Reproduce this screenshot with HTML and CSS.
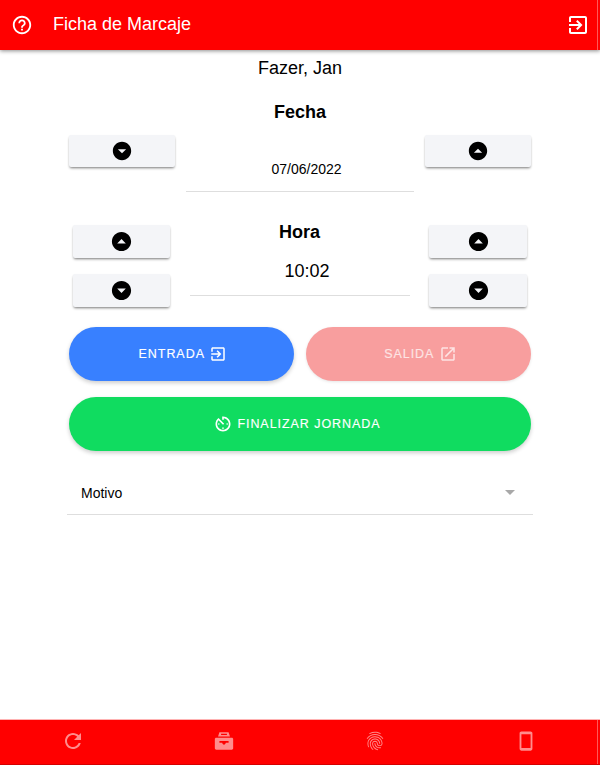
FILE: index.html
```html
<!DOCTYPE html>
<html lang="es">
<head>
<meta charset="utf-8">
<title>Ficha de Marcaje</title>
<link rel="stylesheet" href="styles.css">
</head>
<body>
<div class="page">
  <header class="topbar">
    <svg class="ico ico-22" viewBox="0 0 24 24"><path d="M11 18h2v-2h-2v2zm1-16C6.48 2 2 6.48 2 12s4.48 10 10 10 10-4.48 10-10S17.52 2 12 2zm0 18c-4.41 0-8-3.59-8-8s3.59-8 8-8 8 3.59 8 8-3.59 8-8 8zm0-14c-2.21 0-4 1.79-4 4h2c0-1.1.9-2 2-2s2 .9 2 2c0 2-3 1.75-3 5h2c0-2.25 3-2.5 3-5 0-2.21-1.79-4-4-4z"/></svg>
    <h1 class="title">Ficha de Marcaje</h1>
    <svg class="ico ico-24" viewBox="0 0 24 24"><path d="M10.09 15.59L11.5 17l5-5-5-5-1.41 1.41L12.67 11H3v2h9.67l-2.58 2.59zM19 3H5c-1.11 0-2 .9-2 2v4h2V5h14v14H5v-4H3v4c0 1.1.89 2 2 2h14c1.1 0 2-.9 2-2V5c0-1.1-.9-2-2-2z"/></svg>
  </header>

  <main class="content">
    <div class="user">Fazer, Jan</div>
    <h2 class="heading heading-date">Fecha</h2>
    <section class="date-row">
      <button class="step"><svg class="ico-step" viewBox="0 0 24 24"><path d="M12 2C6.48 2 2 6.48 2 12s4.48 10 10 10 10-4.48 10-10S17.52 2 12 2zm0 12.500l-4.500-4.500h9l-4.500 4.500z"/></svg></button>
      <div class="field field-date">07/06/2022</div>
      <button class="step"><svg class="ico-step" viewBox="0 0 24 24"><path d="M12 2C6.48 2 2 6.48 2 12s4.48 10 10 10 10-4.48 10-10S17.52 2 12 2zm0 7.500l4.500 4.500h-9l4.500-4.500z"/></svg></button>
    </section>

    <section class="time-row">
      <div class="step-col">
        <button class="step"><svg class="ico-step" viewBox="0 0 24 24"><path d="M12 2C6.48 2 2 6.48 2 12s4.48 10 10 10 10-4.48 10-10S17.52 2 12 2zm0 7.500l4.500 4.500h-9l4.500-4.500z"/></svg></button>
        <button class="step"><svg class="ico-step" viewBox="0 0 24 24"><path d="M12 2C6.48 2 2 6.48 2 12s4.48 10 10 10 10-4.48 10-10S17.52 2 12 2zm0 12.500l-4.500-4.500h9l-4.500 4.500z"/></svg></button>
      </div>
      <div class="time-mid">
        <h2 class="heading">Hora</h2>
        <div class="field field-time"><span class="time-val">10:02</span></div>
      </div>
      <div class="step-col">
        <button class="step"><svg class="ico-step" viewBox="0 0 24 24"><path d="M12 2C6.48 2 2 6.48 2 12s4.48 10 10 10 10-4.48 10-10S17.52 2 12 2zm0 7.500l4.500 4.500h-9l4.500-4.500z"/></svg></button>
        <button class="step"><svg class="ico-step" viewBox="0 0 24 24"><path d="M12 2C6.48 2 2 6.48 2 12s4.48 10 10 10 10-4.48 10-10S17.52 2 12 2zm0 12.500l-4.500-4.500h9l-4.500 4.500z"/></svg></button>
      </div>
    </section>

    <section class="actions">
      <button class="pill pill-in">ENTRADA <svg class="ico ico-btn" viewBox="0 0 24 24"><path d="M10.09 15.59L11.5 17l5-5-5-5-1.41 1.41L12.67 11H3v2h9.67l-2.58 2.59zM19 3H5c-1.11 0-2 .9-2 2v4h2V5h14v14H5v-4H3v4c0 1.1.89 2 2 2h14c1.1 0 2-.9 2-2V5c0-1.1-.9-2-2-2z"/></svg></button>
      <button class="pill pill-out">SALIDA <svg class="ico ico-btn" viewBox="0 0 24 24"><path d="M19 19H5V5h7V3H5c-1.11 0-2 .9-2 2v14c0 1.1.89 2 2 2h14c1.1 0 2-.9 2-2v-7h-2v7zM14 3v2h3.59l-9.83 9.83 1.41 1.41L19 6.41V10h2V3h-7z"/></svg></button>
      <button class="pill pill-end"><svg class="ico ico-timer" viewBox="0 0 24 24"><path d="M11 17c0 .55.45 1 1 1s1-.45 1-1-.45-1-1-1-1 .45-1 1zm0-14v4h2V5.08c3.39.49 6 3.39 6 6.92 0 3.87-3.13 7-7 7s-7-3.13-7-7c0-1.68.59-3.22 1.58-4.42L12 13l1.41-1.41-6.8-6.8v.02C4.42 6.45 3 9.05 3 12c0 4.97 4.02 9 9 9 4.97 0 9-4.03 9-9s-4.03-9-9-9h-1zm7 9c0-.55-.45-1-1-1s-1 .45-1 1 .45 1 1 1 1-.45 1-1zM6 12c0 .55.45 1 1 1s1-.45 1-1-.45-1-1-1-1 .45-1 1z"/></svg> FINALIZAR JORNADA</button>
    </section>

    <div class="select">
      <span>Motivo</span>
      <span class="caret"></span>
    </div>
  </main>

  <footer class="tabs">
    <svg class="tab-ico tab-ico-lg" viewBox="0 0 24 24"><path d="M17.65 6.35C16.2 4.9 14.21 4 12 4c-4.42 0-7.99 3.58-7.99 8s3.57 8 7.99 8c3.73 0 6.84-2.55 7.73-6h-2.08c-.82 2.33-3.04 4-5.65 4-3.31 0-6-2.69-6-6s2.69-6 6-6c1.66 0 3.14.69 4.22 1.78L13 11h7V4l-2.35 2.35z"/></svg>
    <svg class="tab-ico" viewBox="0 0 24 24"><path d="M7 2.500h10L18.500 7h-13zM8.800 4v1.500h6.400V4zM3.500 8.500h17c.8 0 1.500.7 1.500 1.500v10c0 .8-.7 1.500-1.500 1.500h-17c-.8 0-1.500-.7-1.500-1.500V10c0-.8.7-1.500 1.500-1.500zM7 12v2h3c.3 1.200 1 2 2 2s1.700-.8 2-2h3v-2z" fill-rule="evenodd"/></svg>
    <svg class="tab-ico" viewBox="0 0 24 24"><path d="M17.81 4.47c-.08 0-.16-.02-.23-.06C15.66 3.42 14 3 12.01 3c-1.98 0-3.86.47-5.58 1.41-.24.13-.54.04-.68-.2-.13-.24-.04-.55.2-.68C7.82 2.52 9.86 2 12.01 2c2.13 0 3.99.47 6.03 1.52.25.13.34.43.21.67-.09.18-.26.28-.44.28zM3.5 9.72c-.1 0-.2-.03-.29-.09-.23-.16-.28-.47-.12-.7.99-1.4 2.25-2.5 3.75-3.27C9.98 4.04 14 4.03 17.15 5.65c1.5.77 2.76 1.86 3.75 3.25.16.22.11.54-.12.7-.23.16-.54.11-.7-.12-.9-1.26-2.04-2.25-3.39-2.94-2.87-1.47-6.54-1.47-9.4.01-1.36.7-2.5 1.7-3.4 2.96-.08.14-.23.21-.39.21zm6.25 12.07c-.13 0-.26-.05-.35-.15-.87-.87-1.34-1.43-2.01-2.64-.69-1.23-1.05-2.73-1.05-4.34 0-2.97 2.54-5.39 5.66-5.39s5.66 2.42 5.66 5.39c0 .28-.22.5-.5.5s-.5-.22-.5-.5c0-2.42-2.09-4.39-4.66-4.39-2.57 0-4.66 1.97-4.66 4.39 0 1.44.32 2.77.93 3.85.64 1.15 1.08 1.64 1.85 2.42.19.2.19.51 0 .71-.11.1-.24.15-.37.15zm7.17-1.85c-1.19 0-2.24-.3-3.1-.89-1.49-1.01-2.38-2.65-2.38-4.39 0-.28.22-.5.5-.5s.5.22.5.5c0 1.41.72 2.74 1.94 3.56.71.48 1.54.71 2.54.71.24 0 .64-.03 1.04-.1.27-.05.53.13.58.41.05.27-.13.53-.41.58-.57.11-1.07.12-1.21.12zM14.91 22c-.04 0-.09-.01-.13-.02-1.59-.44-2.63-1.03-3.72-2.1-1.4-1.39-2.17-3.24-2.17-5.22 0-1.62 1.38-2.94 3.08-2.94 1.7 0 3.08 1.32 3.08 2.94 0 1.07.93 1.94 2.08 1.94s2.08-.87 2.08-1.94c0-3.77-3.25-6.83-7.25-6.83-2.84 0-5.44 1.58-6.61 4.03-.39.81-.59 1.76-.59 2.8 0 .78.07 2.01.67 3.61.1.26-.03.55-.29.64-.26.1-.55-.04-.64-.29-.49-1.31-.73-2.61-.73-3.96 0-1.2.23-2.29.68-3.24 1.33-2.79 4.28-4.6 7.51-4.6 4.55 0 8.25 3.51 8.25 7.83 0 1.62-1.38 2.94-3.08 2.94s-3.08-1.32-3.08-2.94c0-1.07-.93-1.94-2.08-1.94s-2.08.87-2.08 1.94c0 1.71.66 3.31 1.87 4.51.95.94 1.86 1.46 3.27 1.85.27.07.42.35.35.61-.05.23-.26.38-.47.38z"/></svg>
    <svg class="tab-ico" viewBox="0 0 24 24"><path d="M7 1.500h10c1.100 0 2 .9 2 2v17c0 1.100-.9 2-2 2H7c-1.100 0-2-.9-2-2v-17c0-1.100.9-2 2-2zM7 4.500v15h10v-15z" fill-rule="evenodd"/></svg>
  </footer>
</div>
</body>
</html>
```
FILE: styles.css
```css
* { box-sizing: border-box; }
html, body { margin: 0; padding: 0; height: 100%; background: #fff; }
body { font-family: "Liberation Sans", Arial, sans-serif; color: #000; }

.page { width: 600px; height: 765px; display: flex; flex-direction: column; overflow: hidden; }

.topbar {
  height: 50px; flex: none; background: #f00; color: #fff;
  display: flex; align-items: center; padding: 0 10px 1px;
  box-shadow: 0 1px 4px rgba(0, 0, 0, .45); position: relative; z-index: 1;
}
.topbar::after, .tabs::after {
  content: ""; position: absolute; top: 0; bottom: 0; right: 2px; width: 1px;
  background: rgba(255, 255, 255, .35);
}
.title { flex: 1; margin: -1px 0 0 20.500px; font-size: 18px; font-weight: 400; }
.ico { fill: currentColor; display: block; flex: none; }
.ico-24 { width: 24px; height: 24px; }
.ico-22 { width: 22px; height: 22px; margin-left: .500px; }
.ico-btn { width: 18px; height: 18px; }
.ico-timer { width: 20px; height: 20px; }

.content { flex: 1; width: 466px; margin: 0 auto; display: flex; flex-direction: column; }
.user { font-size: 18px; line-height: 22px; text-align: center; margin-top: 7px; }
.heading { margin: 0; font-size: 18px; line-height: 22px; font-weight: 700; text-align: center; }
.heading-date { margin-top: 22px; }

.date-row {
  margin: 12px 2px 0; height: 57px;
  display: grid; grid-template-columns: 106px 1fr 106px; column-gap: 11px; align-items: start;
}
.step {
  width: 100%; height: 32px; padding: 0; border: 0; border-radius: 2px; background: #f4f5f8;
  display: flex; align-items: center; justify-content: center;
  box-shadow: 0 2px 3px -1px rgba(0, 0, 0, .45), 0 1px 2px rgba(0, 0, 0, .12);
}
.ico-step { width: 22px; height: 22px; fill: #000; display: block; }

.field { border-bottom: 1px solid #dedede; text-align: center; }
.field-date { height: 57px; padding: 26px 0 0 13px; font-size: 14px; line-height: 16px; }

.time-row {
  margin: 33px 6px 0; display: grid; grid-template-columns: 97px 1fr 98px; column-gap: 19.500px;
}
.step-col { display: flex; flex-direction: column; gap: 16px; }
.step-col .step { height: 33px; }
.step-col .ico-step { width: 23px; height: 23px; }
.time-mid { display: flex; flex-direction: column; }
.time-mid .heading { margin-top: -4px; }
.field-time { height: 53px; padding-top: 17px; font-size: 18px; line-height: 22px; }
.time-val { margin-left: 15px; }

.actions {
  margin: 20px 2px 0; display: grid; grid-template-columns: 1fr 1fr; gap: 16px 12px;
}
.pill {
  height: 54px; border: 0; border-radius: 27px; padding: 0; color: #fff;
  font: 400 12.500px "Liberation Sans", Arial, sans-serif; letter-spacing: .95px;
  -webkit-text-stroke: .15px currentColor;
  display: flex; align-items: center; justify-content: center; gap: 4.500px;
  box-shadow: 0 2px 4px rgba(0, 0, 0, .2);
}
.pill-in { background: #3880ff; padding-left: 3px; }
.pill-out { background: #f89e9e; color: #fde4e4; padding-left: 4px; box-shadow: 0 1px 3px rgba(0, 0, 0, .1); }
.pill-end { grid-column: 1 / -1; background: #10dc60; gap: 4px; padding-right: 6px; }

.select {
  margin-top: 20px; height: 44px; padding: 1px 18px 0 14px; border-bottom: 1px solid #dedede;
  display: flex; align-items: center; justify-content: space-between; font-size: 14px;
}
.caret { width: 0; height: 0; margin-top: -2px; border-left: 5px solid transparent; border-right: 5px solid transparent; border-top: 5px solid #a8a8a8; }

.tabs {
  height: 46px; flex: none; background: #f00; position: relative;
  border-top: 1px solid #ffb3b3; border-bottom: 1px solid #d40000;
  display: grid; grid-template-columns: repeat(4, 151px); justify-content: center;
  align-items: center; justify-items: center; padding: 0 2px 2px 0;
}
.tab-ico { width: 22px; height: 22px; fill: rgba(255, 255, 255, .55); display: block; }
.tab-ico-lg { width: 24px; height: 24px; }
```
